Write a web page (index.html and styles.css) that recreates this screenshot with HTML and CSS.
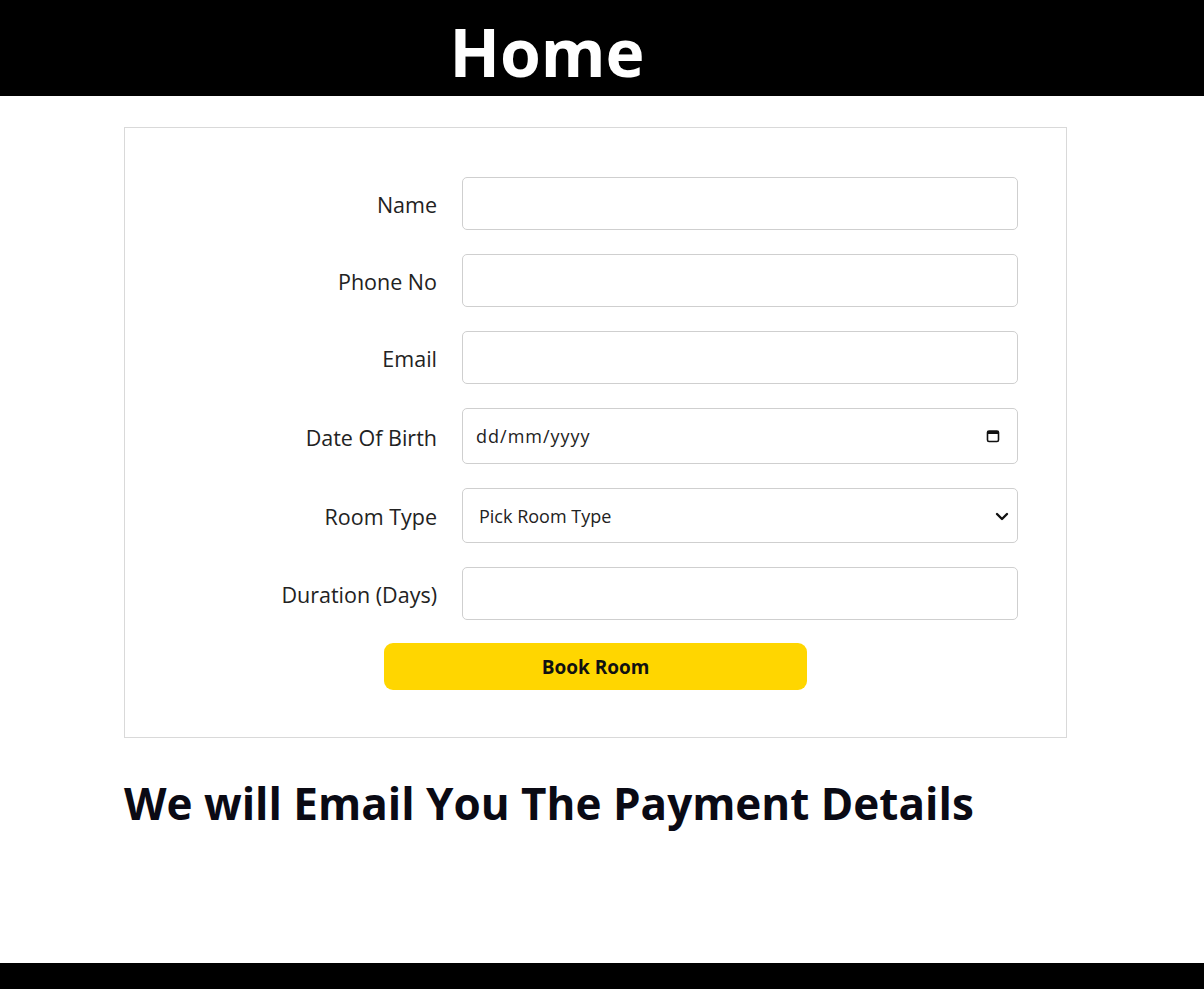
FILE: index.html
```html
<!DOCTYPE html>
<html lang="en">
<head>
<meta charset="utf-8">
<title>Home</title>
<link rel="stylesheet" href="styles.css">
</head>
<body>
<header class="topbar">
  <h1 class="title">Home</h1>
</header>
<main class="content">
  <form class="booking">
    <div class="fields">
      <label class="lbl" for="name">Name</label>
      <input class="ctl" id="name" type="text">

      <label class="lbl" for="phone">Phone No</label>
      <input class="ctl" id="phone" type="text">

      <label class="lbl" for="email">Email</label>
      <input class="ctl" id="email" type="text">

      <label class="lbl" for="dob">Date Of Birth</label>
      <div class="ctl-wrap">
        <input class="ctl ctl-date" id="dob" type="text" placeholder="dd/mm/yyyy">
        <svg class="ctl-icon cal" width="14" height="14" viewBox="0 0 14 14" aria-hidden="true">
          <rect x="1.5" y="2" width="11" height="10.5" rx="1.5" fill="none" stroke="#111" stroke-width="1.6"/>
          <rect x="1.5" y="2" width="11" height="3" fill="#111"/>
        </svg>
      </div>

      <label class="lbl" for="room">Room Type</label>
      <div class="ctl-wrap">
        <select class="ctl ctl-select" id="room">
          <option>Pick Room Type</option>
        </select>
        <svg class="ctl-icon chev" width="16" height="16" viewBox="0 0 16 16" aria-hidden="true">
          <path d="M3 6l5 5 5-5" fill="none" stroke="#111" stroke-width="2.4" stroke-linecap="round" stroke-linejoin="round"/>
        </svg>
      </div>

      <label class="lbl" for="dur">Duration (Days)</label>
      <input class="ctl" id="dur" type="text">
    </div>
    <div class="actions">
      <button class="btn" type="button">Book Room</button>
    </div>
  </form>
  <h2 class="note">We will Email You The Payment Details</h2>
</main>
<footer class="bottombar"></footer>
</body>
</html>
```

FILE: styles.css
```css
* { box-sizing: border-box; }

html, body {
  margin: 0;
  padding: 0;
  height: 100%;
}

body {
  font-family: "Open Sans", "Noto Sans", "Liberation Sans", sans-serif;
  color: #111;
  background: #fff;
  display: flex;
  flex-direction: column;
  min-height: 989px;
}

.topbar {
  background: #000;
  height: 96px;
  display: flex;
  align-items: center;
  justify-content: center;
  padding-right: 110px;
}

.title {
  margin: 0;
  color: #fff;
  font-size: 66px;
  font-weight: 700;
  line-height: 1;
  padding-top: 6px;
}

.content {
  flex: 1;
  padding: 31px 0 0 124px;
}

.booking {
  width: 943px;
  border: 1px solid #d9d9d9;
  padding: 49px 48px 47px 0;
}

.fields {
  display: grid;
  grid-template-columns: 312px 556px;
  column-gap: 25px;
  row-gap: 24px;
  align-items: center;
}

.lbl {
  text-align: right;
  font-size: 21.5px;
  color: #222;
  padding-top: 2px;
}

.ctl {
  width: 100%;
  height: 53px;
  border: 1px solid #cfcfcf;
  border-radius: 5px;
  background: #fff;
  font-family: inherit;
  font-size: 18px;
  color: #222;
  padding: 0 16px;
  outline: none;
  margin: 0;
}

.ctl-wrap {
  position: relative;
}

.ctl-date {
  height: 56px;
  padding-left: 13px;
  letter-spacing: 1px;
}

.ctl-date::placeholder {
  color: #222;
}

.ctl-select {
  -webkit-appearance: none;
  appearance: none;
  height: 55px;
}

.ctl-icon {
  position: absolute;
  top: 50%;
  transform: translateY(-50%);
  pointer-events: none;
}

.cal { right: 18px; }
.chev { right: 8px; }

.actions {
  display: flex;
  justify-content: center;
  padding-left: 48px;
  margin-top: 23px;
}

.btn {
  width: 423px;
  height: 47px;
  border: none;
  border-radius: 9px;
  background: #ffd600;
  font-family: inherit;
  font-size: 19px;
  font-weight: 700;
  color: #111;
}

.note {
  margin: 35px 0 0;
  font-size: 44px;
  font-weight: 700;
  color: #0a0a14;
}

.bottombar {
  background: #000;
  height: 26px;
}
```
